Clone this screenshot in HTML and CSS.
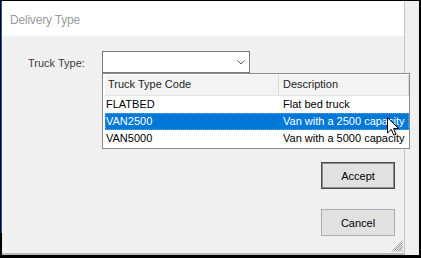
FILE: index.html
```html
<!DOCTYPE html>
<html>
<head>
<meta charset="utf-8">
<title>Delivery Type</title>
<link rel="stylesheet" href="styles.css">
</head>
<body>
<div class="screen">
  <div class="window">
    <div class="dialog">
      <div class="titlebar">Delivery Type</div>
      <div class="dlg-body">
        <div class="field-row">
          <label class="field-label">Truck Type:</label>
          <div class="combo">
            <span class="combo-value"></span>
            <svg class="chevron" width="8" height="5" viewBox="0 0 8 5"><path d="M0.5 0.5 L4 4 L7.5 0.5" fill="none" stroke="#5a5a5a" stroke-width="1"/></svg>
            <div class="popup">
              <div class="list-head">
                <div class="hcell col1">Truck Type Code</div>
                <div class="hcell col2">Description</div>
              </div>
              <div class="list-row">
                <div class="cell col1">FLATBED</div>
                <div class="cell col2">Flat bed truck</div>
              </div>
              <div class="list-row selected">
                <div class="cell col1">VAN2500</div>
                <div class="cell col2">Van with a 2500 capacity</div>
              </div>
              <div class="list-row">
                <div class="cell col1">VAN5000</div>
                <div class="cell col2">Van with a 5000 capacity</div>
              </div>
            </div>
          </div>
        </div>
        <div class="buttons">
          <button class="btn default">Accept</button>
          <button class="btn">Cancel</button>
        </div>
      </div>
      <svg class="grip" width="12" height="12" viewBox="0 0 12 12">
        <g stroke="#b0b0b0" stroke-width="1">
          <line x1="11.5" y1="0.5" x2="0.5" y2="11.5"/>
          <line x1="11.5" y1="4.5" x2="4.5" y2="11.5"/>
          <line x1="11.5" y1="8.5" x2="8.5" y2="11.5"/>
        </g>
        <g stroke="#888" stroke-width="1">
          <line x1="11.5" y1="2.5" x2="2.5" y2="11.5"/>
          <line x1="11.5" y1="6.5" x2="6.5" y2="11.5"/>
          <line x1="11.5" y1="10.5" x2="10.5" y2="11.5"/>
        </g>
      </svg>
    </div>
    <div class="strip"></div>
  </div>
  <svg class="cursor" width="12" height="19" viewBox="0 0 12 19">
    <path d="M0.5 0.5 L0.5 16 L4.3 12.4 L6.8 18.2 L9 17.3 L6.6 11.6 L11.5 11.6 Z" fill="#fff" stroke="#000" stroke-width="1" stroke-linejoin="miter"/>
  </svg>
</div>
</body>
</html>
```
FILE: styles.css
```css
* { box-sizing: border-box; }
html, body { margin: 0; padding: 0; background: #000; }
body { font-family: "Liberation Sans", Arial, sans-serif; font-size: 11px; }

.screen {
  position: relative;
  width: 421px;
  height: 258px;
  background: #000;
  padding: 1px 2px 3px 1px;
}

.window {
  display: flex;
  height: 100%;
  border-left: 1px solid #1a5fb4;
  border-image: linear-gradient(to bottom, #1a5fb4 0, #1a5fb4 91%, #000 91%) 1;
  border-width: 0 0 0 1px;
  border-style: solid;
  background: #f0f0f0;
  box-shadow: inset 0 -2px 0 #b9b9b9;
}

.dialog {
  position: relative;
  width: 403px;
  height: 252px;
  display: flex;
  flex-direction: column;
  border-right: 1px solid #c4c4c4;
  background: #f0f0f0;
}

.titlebar {
  height: 35px;
  background: #fff;
  color: #9b9b9b;
  font-size: 12px;
  padding: 11px 0 0 8px;
  line-height: 16px;
  letter-spacing: -0.2px;
}

.dlg-body {
  flex: 1;
  display: flex;
  flex-direction: column;
  padding: 15px 0 0 26px;
}

.field-row {
  display: flex;
  align-items: center;
  height: 22px;
}

.field-label {
  width: 74px;
  color: #3c3c3c;
  padding-top: 2px;
}

.combo {
  position: relative;
  width: 148px;
  height: 22px;
  background: #fff;
  border: 1px solid #7a7a7a;
  display: flex;
  align-items: center;
  justify-content: flex-end;
  padding-right: 4px;
}

.chevron { display: block; }

.popup {
  position: absolute;
  left: -1px;
  top: 21px;
  width: 308px;
  height: 76px;
  background: #fff;
  border: 1px solid #8a8a8a;
  padding: 1px 0 1px 2px;
  z-index: 2;
}

.list-head {
  display: flex;
  height: 21px;
  background: #f3f3f3;
  border-bottom: 1px solid #e3e3e3;
  color: #1e1e1e;
}

.hcell {
  line-height: 19px;
  border-right: 1px solid #dadada;
}
.hcell.col1 { width: 174px; padding-left: 3px; }
.hcell.col2 { flex: 1; padding-left: 4px; }

.list-row {
  display: flex;
  height: 17px;
  line-height: 17px;
  color: #000;
}
.list-row.selected {
  background: #0078d7;
  color: #fff;
  outline: 1px dotted rgba(255,255,255,0.35);
  outline-offset: -1px;
}
.cell.col1 { width: 174px; padding-left: 1px; }
.cell.col2 { flex: 1; padding-left: 4px; white-space: nowrap; }

.buttons {
  align-self: flex-end;
  display: flex;
  flex-direction: column;
  gap: 20px;
  margin-top: 89px;
  margin-right: 9px;
}

.btn {
  width: 74px;
  height: 27px;
  font-family: "Liberation Sans", Arial, sans-serif;
  font-size: 11px;
  color: #000;
  background: #e1e1e1;
  border: 1px solid #adadad;
  padding: 0;
}
.btn.default {
  border: 1px solid #4a4a4a;
  box-shadow: inset 0 0 0 1px #8c8c8c;
}

.grip {
  position: absolute;
  right: 1px;
  bottom: 1px;
}

.strip {
  flex: 1;
  background: #f0f0f0;
}

.cursor {
  position: absolute;
  left: 387px;
  top: 117px;
  z-index: 5;
}
```
